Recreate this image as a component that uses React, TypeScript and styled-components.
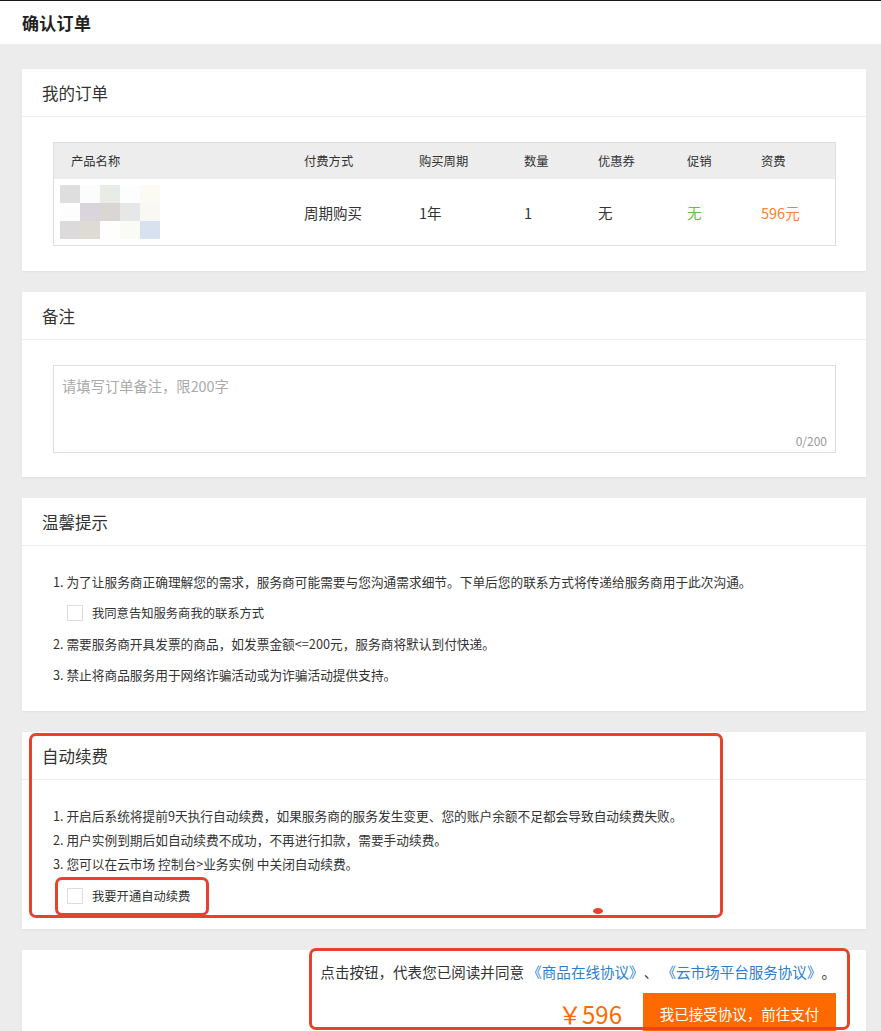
import * as React from "react"
import styled, { createGlobalStyle } from "styled-components"

const GlobalStyle = createGlobalStyle`
  html, body {
    margin: 0;
    padding: 0;
    background: #ececec;
    font-family: "Noto Sans CJK SC", "Noto Sans", sans-serif;
    color: #333;
    text-spacing-trim: space-all;
  }
  * { box-sizing: border-box; }
`

const TopBar = styled.header`
  height: 44px;
  background: #fff;
  border-top: 1px solid #1a1a1a;
  display: flex;
  align-items: center;
  padding-left: 22px;
`
const PageTitle = styled.h1`
  margin: 0;
  font-size: 17px;
  font-weight: bold;
  color: #222;
  letter-spacing: 0.3px;
`
const Main = styled.main`
  padding: 25px 15px 0 22px;
  display: flex;
  flex-direction: column;
  gap: 21px;
`
const Card = styled.section`
  position: relative;
  background: #fff;
  box-shadow: 0 1px 2px rgba(0, 0, 0, 0.06);
`
const CardHeader = styled.div`
  height: 48px;
  border-bottom: 1px solid #ededed;
  display: flex;
  align-items: center;
  padding-left: 20px;
  font-size: 16.5px;
  color: #333;
`
const CardBody = styled.div<{ $pad: string }>`
  padding: ${p => p.$pad};
`

const Table = styled.div`
  border: 1px solid #dedede;
`
const Row = styled.div<{ $head?: boolean }>`
  display: grid;
  grid-template-columns: 233px 115px 105px 74px 89px 74px 1fr;
  align-items: center;
  height: ${p => (p.$head ? "36px" : "66px")};
  background: ${p => (p.$head ? "#ededed" : "#fff")};
  font-size: ${p => (p.$head ? "12.3px" : "14.5px")};
  color: #333;
`
const Cell = styled.div<{ $color?: string }>`
  padding-left: 17px;
  color: ${p => p.$color || "inherit"};
`
const ThumbCell = styled.div`
  padding-left: 6px;
  display: flex;
  align-items: center;
`

const NoteBox = styled.div`
  position: relative;
`
const NoteArea = styled.textarea`
  display: block;
  width: 100%;
  height: 88px;
  border: 1px solid #dcdce6;
  resize: none;
  padding: 9px 8px;
  font-family: "Noto Sans CJK SC", sans-serif;
  font-size: 14.3px;
  outline: none;
  &::placeholder { color: #aaa; }
`
const Counter = styled.span`
  position: absolute;
  right: 9px;
  bottom: 4px;
  font-size: 12px;
  color: #999;
`

const List = styled.div<{ $gap: number; $size: number; $lh: number }>`
  display: flex;
  flex-direction: column;
  gap: ${p => p.$gap}px;
  font-size: ${p => p.$size}px;
  line-height: ${p => p.$lh}px;
  color: #333;
`
const Item = styled.div``
const CheckRow = styled.label<{ $top?: number }>`
  display: flex;
  align-items: center;
  gap: 9px;
  padding-left: 14px;
  height: 20px;
  margin-top: ${p => p.$top || 0}px;
  font-size: 12.3px;
  color: #333;
`
const Box = styled.span`
  width: 16px;
  height: 16px;
  border: 1px solid #dcdcdc;
  background: #fff;
`

const PayBody = styled.div`
  padding: 12px 30px 30px 0;
  display: flex;
  flex-direction: column;
  align-items: flex-end;
  gap: 11px;
`
const Agreement = styled.div`
  font-size: 14.55px;
  line-height: 20px;
  color: #333;
`
const Link = styled.a`
  color: #2b7fd3;
  text-decoration: none;
`
const PayRow = styled.div`
  display: flex;
  align-items: center;
  gap: 21px;
`
const Price = styled.span`
  font-size: 24px;
  color: #ff6a00;
`
const PayButton = styled.button`
  width: 193px;
  height: 40px;
  border: none;
  background: #ff6a00;
  color: #fff;
  font-family: "Noto Sans CJK SC", sans-serif;
  font-size: 14.5px;
`

const Mark = styled.div<{ $l: number; $t: number; $w: number; $h: number }>`
  position: absolute;
  left: ${p => p.$l}px;
  top: ${p => p.$t}px;
  width: ${p => p.$w}px;
  height: ${p => p.$h}px;
  border: 3px solid #e8412c;
  border-radius: 7px;
  pointer-events: none;
`
const Dot = styled.div`
  position: absolute;
  left: 571px;
  top: 176px;
  width: 10px;
  height: 6px;
  border-radius: 50%;
  background: #e8412c;
`

const pixels = [
  ["#dedede", "#fbfcfb", "#e9ebe7", "#fdfdfd", "#fbfbf4"],
  ["#fdfdfd", "#dad5dd", "#d9d6d3", "#e6e7e8", "#f9f8f2"],
  ["#dcdadb", "#dedbd5", "#fefefe", "#fafbf5", "#d8e1ef"],
]

function Thumb() {
  return (
    <svg width="100" height="54" viewBox="0 0 100 54">
      {pixels.map((row, r) =>
        row.map((c, i) => <rect key={r + "-" + i} x={i * 20} y={r * 18} width="20" height="18" fill={c} />)
      )}
    </svg>
  )
}

export default function App() {
  return (
    <>
      <GlobalStyle />
      <TopBar>
        <PageTitle>确认订单</PageTitle>
      </TopBar>
      <Main>
        <Card>
          <CardHeader>我的订单</CardHeader>
          <CardBody $pad="25px 30px 25px 31px">
            <Table>
              <Row $head>
                <Cell>产品名称</Cell>
                <Cell>付费方式</Cell>
                <Cell>购买周期</Cell>
                <Cell>数量</Cell>
                <Cell>优惠券</Cell>
                <Cell>促销</Cell>
                <Cell>资费</Cell>
              </Row>
              <Row>
                <ThumbCell><Thumb /></ThumbCell>
                <Cell>周期购买</Cell>
                <Cell>1年</Cell>
                <Cell>1</Cell>
                <Cell>无</Cell>
                <Cell $color="#5cc63a">无</Cell>
                <Cell $color="#ff7f2a">596元</Cell>
              </Row>
            </Table>
          </CardBody>
        </Card>

        <Card>
          <CardHeader>备注</CardHeader>
          <CardBody $pad="25px 30px 24px 31px">
            <NoteBox>
              <NoteArea placeholder="请填写订单备注，限200字" />
              <Counter>0/200</Counter>
            </NoteBox>
          </CardBody>
        </Card>

        <Card>
          <CardHeader>温馨提示</CardHeader>
          <CardBody $pad="26px 20px 26px 31px">
            <List $gap={11} $size={12.7} $lh={20}>
              <Item>1. 为了让服务商正确理解您的需求，服务商可能需要与您沟通需求细节。下单后您的联系方式将传递给服务商用于此次沟通。</Item>
              <CheckRow><Box />我同意告知服务商我的联系方式</CheckRow>
              <Item>2. 需要服务商开具发票的商品，如发票金额&lt;=200元，服务商将默认到付快递。</Item>
              <Item>3. 禁止将商品服务用于网络诈骗活动或为诈骗活动提供支持。</Item>
            </List>
          </CardBody>
        </Card>

        <Card>
          <CardHeader>自动续费</CardHeader>
          <CardBody $pad="24px 20px 23px 31px">
            <List $gap={0} $size={12.7} $lh={24}>
              <Item>1. 开启后系统将提前9天执行自动续费，如果服务商的服务发生变更、您的账户余额不足都会导致自动续费失败。</Item>
              <Item>2. 用户实例到期后如自动续费不成功，不再进行扣款，需要手动续费。</Item>
              <Item>3. 您可以在云市场 控制台&gt;业务实例 中关闭自动续费。</Item>
              <CheckRow $top={10}><Box />我要开通自动续费</CheckRow>
            </List>
          </CardBody>
          <Mark $l={7} $t={1} $w={694} $h={185} />
          <Mark $l={33} $t={145} $w={154} $h={39} />
          <Dot />
        </Card>

        <Card>
          <PayBody>
            <Agreement>
              点击按钮，代表您已阅读并同意 <Link>《商品在线协议》</Link>、 <Link>《云市场平台服务协议》</Link>。
            </Agreement>
            <PayRow>
              <Price>￥596</Price>
              <PayButton>我已接受协议，前往支付</PayButton>
            </PayRow>
          </PayBody>
          <Mark $l={287} $t={-2} $w={541} $h={82} />
        </Card>
      </Main>
    </>
  )
}
